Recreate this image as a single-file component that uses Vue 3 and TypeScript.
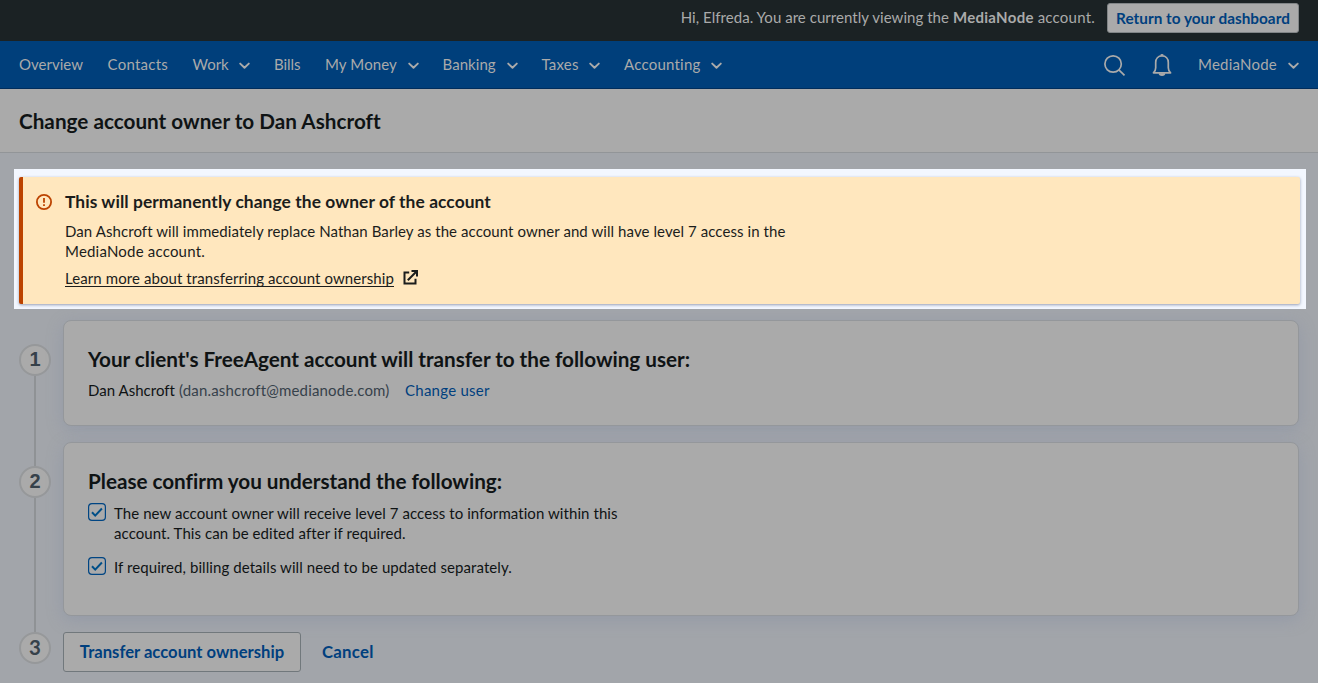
<script setup lang="ts">
interface NavItem {
  label: string
  menu: boolean
  width: number
  tracking: number
}

const navItems: NavItem[] = [
  { label: 'Overview', menu: false, width: 64.5, tracking: 0.02 },
  { label: 'Contacts', menu: false, width: 61, tracking: 0.26 },
  { label: 'Work', menu: true, width: 36.5, tracking: -0.02 },
  { label: 'Bills', menu: false, width: 27, tracking: -0.05 },
  { label: 'My Money', menu: true, width: 72.5, tracking: 0.12 },
  { label: 'Banking', menu: true, width: 54, tracking: 0.06 },
  { label: 'Taxes', menu: true, width: 37.5, tracking: 0.2 },
  { label: 'Accounting', menu: true, width: 77, tracking: 0.22 },
]

const confirmations: string[][] = [
  ['The new account owner will receive level 7 access to information within this', 'account. This can be edited after if required.'],
  ['If required, billing details will need to be updated separately.'],
]
</script>

<template>
  <div class="page">
    <div class="topbar">
      <p class="greeting">Hi, Elfreda. You are currently viewing the <b>MediaNode</b> <span class="tail">account.</span></p>
      <button class="return">Return to your dashboard</button>
    </div>

    <nav class="nav">
      <a
        v-for="item in navItems"
        :key="item.label"
        class="nav-item"
      >
        <span :style="{ width: item.width + 'px', letterSpacing: item.tracking + 'px' }">{{ item.label }}</span>
        <svg v-if="item.menu" class="chevron" width="11" height="8" viewBox="0 0 11 8"><path d="M1.2 1.6 5.5 5.8 9.8 1.6" /></svg>
      </a>
      <div class="nav-right">
        <svg class="icon" width="22" height="24" viewBox="0 0 22 24">
          <circle cx="9.1" cy="11" r="8.2" />
          <path d="M14.900 16.800 20.500 22.400" />
        </svg>
        <svg class="icon bell" width="20" height="24" viewBox="0 0 20 24">
          <path d="M10 2.900c-3.900 0-6.300 2.800-6.300 6.500v5.400c0 2.200-.8 3.800-2.300 5h17.200c-1.500-1.200-2.300-2.800-2.300-5V9.400c0-3.700-2.400-6.500-6.300-6.500Z" />
          <path d="M8.900 2.500a1.200 1.200 0 0 1 2.200 0" />
          <path class="clapper" d="M6.700 20.200h6.600a3.300 2.700 0 0 1-6.600 0Z" />
        </svg>
        <a class="nav-item account">
          <span>MediaNode</span>
          <svg class="chevron" width="11" height="8" viewBox="0 0 11 8"><path d="M1.2 1.6 5.5 5.8 9.8 1.6" /></svg>
        </a>
      </div>
    </nav>

    <header class="header"><h1>Change account owner to Dan Ashcroft</h1></header>

    <section class="spotlight">
      <div class="notice">
        <svg class="alert" width="16" height="16" viewBox="0 0 16 16">
          <circle cx="8" cy="8" r="7.1" />
          <path d="M8 4v4.700M8 10.200v1.900" />
        </svg>
        <div>
          <h2>This will permanently change the owner of the account</h2>
          <p class="body">Dan Ashcroft will immediately replace Nathan Barley as the account owner and will have level 7 access in the<br><span class="second">MediaNode account.</span></p>
          <p class="more">
            <a>Learn more about transferring account ownership</a>
            <svg class="external" width="15" height="15" viewBox="0 0 15 15">
              <path d="M6.200 2.500H1.500v11h11V8.800" />
              <path d="M4.800 10.200 13.200 1.800" />
              <path d="M8.500 1h5.500v5.500" />
            </svg>
          </p>
        </div>
      </div>
    </section>

    <main class="steps">
      <div class="step">
        <div class="rail"><span class="number">1</span><i class="line" /></div>
        <section class="card first">
          <h3>Your client's FreeAgent account will transfer to the following user:</h3>
          <p class="user">
            <span class="name">Dan Ashcroft</span>
            <span class="email">(dan.ashcroft@medianode.com)</span>
            <a class="change">Change user</a>
          </p>
        </section>
      </div>

      <div class="step">
        <div class="rail"><span class="number">2</span><i class="line" /></div>
        <section class="card second-card">
          <h3>Please confirm you understand the following:</h3>
          <label v-for="(lines, i) in confirmations" :key="i" class="confirm">
            <svg class="check" width="18" height="18" viewBox="0 0 18 18">
              <rect x=".6" y=".6" width="16.8" height="16.8" rx="3.400" />
              <path d="M4 9.300 7.200 12.600 13.900 5.500" />
            </svg>
            <span><template v-for="(line, j) in lines" :key="j"><br v-if="j > 0">{{ line }}</template></span>
          </label>
        </section>
      </div>

      <div class="step last">
        <div class="rail end"><span class="number three">3</span></div>
        <button class="transfer">Transfer account ownership</button>
        <a class="cancel">Cancel</a>
      </div>
    </main>
  </div>
</template>

<style>
body { margin: 0; background: #a2a5aa; }
</style>

<style scoped>
* { box-sizing: border-box; }
h1, h2, h3, p { margin: 0; }
.page {
  height: 683px;
  overflow: hidden;
  background: #a2a5aa;
  color: #0f1314;
  font: 15px/20px Lato, "Liberation Sans", sans-serif;
  letter-spacing: 0.075px;
  white-space: nowrap;
}
button { font-family: inherit; font-weight: 700; color: #003f7e; margin: 0; white-space: nowrap; }

.topbar {
  height: 41px;
  padding: 3px 19px 0 0;
  display: flex;
  justify-content: flex-end;
  align-items: flex-start;
  background: #1b2224;
  color: #aaa;
}
.greeting { margin: 4px 12px 0 0; letter-spacing: 0.045px; }
.greeting b { letter-spacing: 0.3px; }
.tail { letter-spacing: 0.22px; }
.return {
  width: 192px;
  height: 30px;
  padding: 0 0 1px;
  border: 1px solid #818587;
  border-radius: 3px;
  background: #aaa;
  font-size: 15.3px;
  line-height: 26px;
  letter-spacing: 0.03px;
}

.nav {
  height: 48px;
  padding: 0 19px;
  display: flex;
  align-items: center;
  gap: 24px;
  background: #003f7b;
  border-bottom: 1px solid #002d5c;
  color: #aaa;
}
.nav-item { display: flex; align-items: center; }
.nav-item span { display: block; margin-top: -2px; }
.chevron { margin: 2px 0 0 10px; fill: none; stroke: #aaa; stroke-width: 1.9; stroke-linecap: round; stroke-linejoin: round; }
.nav-right { margin-left: auto; display: flex; align-items: center; }
.icon { fill: none; stroke: #aaa; stroke-width: 1.7; }
.bell { margin: 0 26px; stroke-linejoin: round; }
.icon .clapper { fill: #aaa; stroke: none; }
.account span { width: 80px; letter-spacing: 0.22px; }

.header {
  height: 64px;
  padding-left: 19px;
  display: flex;
  align-items: center;
  background: #aaa;
  border-bottom: 1px solid #929598;
}
h1, h3 { font-size: 20.7px; line-height: 28px; font-weight: 700; letter-spacing: 0.01px; }
h3 { letter-spacing: -0.02px; }

.spotlight {
  position: relative;
  z-index: 1;
  width: 1292px;
  height: 140px;
  margin: 16px 0 0 14px;
  padding: 8px 6px 5px 5px;
  background: #f3f7ff;
}
.notice {
  height: 127px;
  padding: 13px 0 0 13px;
  display: flex;
  gap: 13px;
  background: #ffe7be;
  border-left: 4px solid #bc4300;
  border-radius: 2px;
  box-shadow: 0 1px 3px rgba(55, 70, 105, 0.5);
  color: #1b1d1c;
}
.alert { margin-top: 4px; fill: none; stroke: #bc4300; stroke-width: 1.8; }
h2 { font-size: 17.4px; line-height: 24px; letter-spacing: 0.07px; }
.body { margin-top: 7px; }
.second { letter-spacing: 0.2px; }
.more { margin-top: 7px; display: flex; align-items: center; letter-spacing: 0.085px; }
.more a { text-decoration: underline; text-decoration-thickness: 1px; text-underline-offset: 2px; text-decoration-skip-ink: none; }
.external { margin: -1px 0 0 9px; fill: none; stroke: #1b1d1c; stroke-width: 2; }

.steps { padding: 11px 19px 0; }
.step { display: flex; margin-bottom: 16px; }
.rail {
  width: 32px;
  margin: 24px 12px -40px 0;
  display: flex;
  flex: none;
  flex-direction: column;
  align-items: center;
}
.number {
  flex: none;
  width: 32px;
  height: 32px;
  border: 2px solid #96989a;
  border-radius: 50%;
  background: #aaa;
  color: #36414a;
  font: 700 20px/27px "Liberation Sans", sans-serif;
  text-align: center;
}
.three { font: 700 20.5px/26px Lato, sans-serif; }
.line { flex: 1; width: 2px; background: #8f9295; }
.step:nth-child(2) .rail { margin-bottom: -16px; }
.last .end { margin: 0 12px 0 0; }
.card {
  flex: 1;
  padding: 24px 24px 0;
  background: #aaa;
  border: 1px solid #94979b;
  border-radius: 8px;
  box-shadow: 0 4px 16px rgba(125, 136, 162, 0.38);
}
.first { height: 106px; }
.second-card { height: 174px; }
.user { margin-top: 7px; display: flex; letter-spacing: 0.02px; }
.email { margin-left: 4px; color: #36414a; letter-spacing: 0.18px; }
.change { margin-left: 15.5px; color: #003f7e; letter-spacing: 0.24px; }
.confirm { display: flex; margin-top: 14px; }
h3 + .confirm { margin-top: 8px; }
.check { flex: none; margin: 0 8px 0 0; fill: #aaa; stroke: #004583; stroke-width: 1.2; }
.check path { fill: none; stroke: #004f88; stroke-width: 2; }
.transfer {
  width: 238px;
  height: 40px;
  padding: 0;
  background: #aaa;
  border: 1px solid #71787c;
  border-radius: 3px;
  font-size: 16.6px;
  line-height: 37px;
  letter-spacing: 0.02px;
}
.cancel { margin-left: 21px; color: #003f7e; font-size: 16.8px; line-height: 39px; font-weight: 700; letter-spacing: 0.24px; }
</style>
